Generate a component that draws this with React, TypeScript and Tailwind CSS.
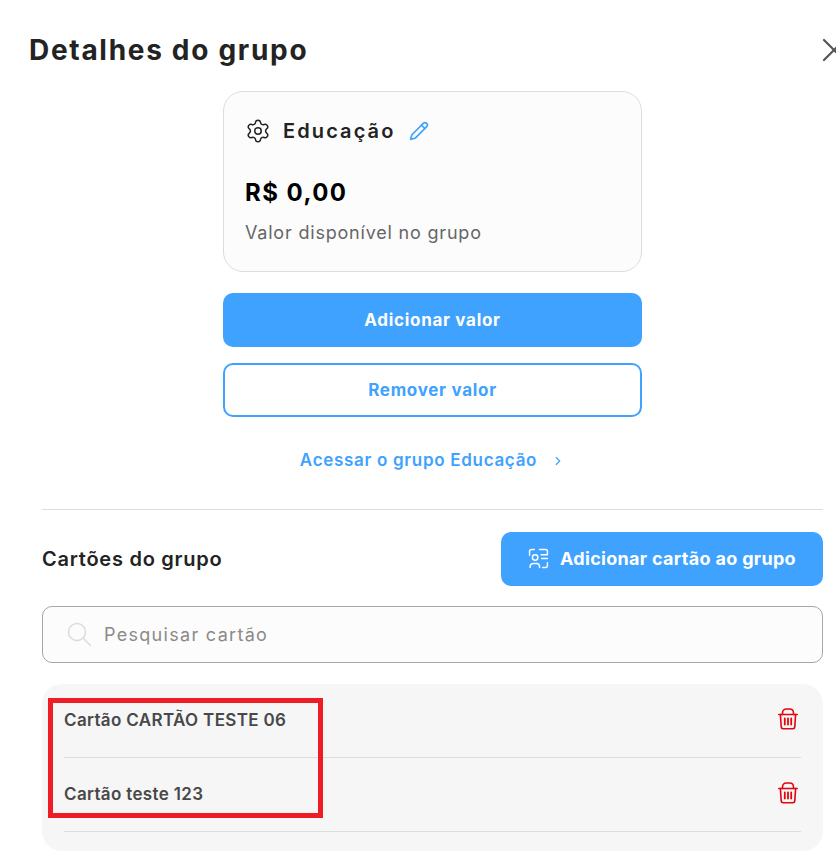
import { Pencil, Settings, ChevronRight, X } from 'lucide-react';

const FONT = "font-['Inter','Liberation_Sans',sans-serif]";

const CARDS = ['Cartão CARTÃO TESTE 06', 'Cartão teste 123'];

function TrashIcon() {
  return (
    <svg width="20" height="22" viewBox="0 0 20 22" fill="none" stroke="#e2060f" strokeWidth="1.6" strokeLinecap="round" strokeLinejoin="round">
      <path d="M0.800 6.500h18.400" />
      <path d="M4.500 6.500V5C4.500 2.600 6.200 1 8.400 1h3.200c2.200 0 3.900 1.600 3.900 4v1.500" />
      <path d="M2.400 6.500l.8 12.400c.1 1.100.8 1.800 1.900 1.800h9.800c1.100 0 1.800-.7 1.900-1.800l.8-12.400" />
      <path d="M6.800 10.500v6M10 10.500v6M13.200 10.500v6" strokeWidth="1.800" />
    </svg>
  );
}

function AddCardIcon() {
  return (
    <svg width="21" height="21" viewBox="0 0 20 20" fill="none" stroke="#ffffff" strokeWidth="1.400" strokeLinecap="round" strokeLinejoin="round">
      <path d="M1.500 7V3.200C1.500 2.200 2.200 1.500 3.200 1.500H6" />
      <path d="M11 1.500h5.800c1 0 1.700.7 1.700 1.700V6" />
      <path d="M18.500 14v3c0 .9-.6 1.500-1.500 1.500h-3" />
      <path d="M2 18.500v-.5c0-1.800 1.500-3.200 3.500-3.200h2.500c1.800 0 3 1.400 3 3.200v.5" />
      <circle cx="6.800" cy="9" r="2.600" />
      <path d="M12.500 6.500h6M13 10h5.500" />
    </svg>
  );
}

function SearchIcon() {
  return (
    <svg width="25" height="25" viewBox="0 0 25 25" fill="none" stroke="#dcdcdc" strokeWidth="1.500" strokeLinecap="round">
      <circle cx="10" cy="10" r="8.500" />
      <path d="M16.500 16.500l7 7" />
    </svg>
  );
}

export default function App() {
  return (
    <div className={`relative h-[851px] w-[836px] overflow-hidden bg-white ${FONT}`}>
      <div className="flex h-[100px] items-start justify-between pt-[32px] pl-[29px]">
        <h1 className="text-[28px] leading-[36px] font-bold tracking-[1.7px] text-[#232323]">Detalhes do grupo</h1>
        <X className="-mt-[2px] -mr-[18px] shrink-0 text-[#555555]" size={40} strokeWidth={1.3} />
      </div>

      <div className="-mt-[9px] ml-[223px] flex w-[419px] flex-col items-center">
        <div className="h-[181px] w-[419px] rounded-[20px] border border-[#dddddd] bg-[#fcfcfc] pt-[24px] pl-[21px]">
          <div className="flex h-[30px] items-center">
            <Settings size={26} strokeWidth={1.4} className="text-[#232323]" />
            <span className="ml-[12px] text-[20px] font-semibold tracking-[2.100px] text-[#232323]">Educação</span>
            <Pencil size={20} strokeWidth={2} className="ml-[14px] text-[#3fa2ff]" />
          </div>
          <p className="mt-[31px] text-[24px] leading-[32px] font-bold tracking-[1.450px] text-black">R$ 0,00</p>
          <p className="mt-[12px] text-[18px] leading-[24px] tracking-[0.800px] text-[#666666]">Valor disponível no grupo</p>
        </div>

        <button className="mt-[21px] h-[54px] w-[419px] rounded-[10px] bg-[#3fa2ff] pt-[2px] text-[17px] font-bold tracking-[0.700px] text-white">Adicionar valor</button>
        <button className="mt-[16px] h-[54px] w-[419px] rounded-[10px] border-2 border-[#3fa2ff] bg-white pt-[2px] text-[17px] font-bold tracking-[0.700px] text-[#3fa2ff]">Remover valor</button>

        <div className="mt-[31px] flex h-[26px] items-center text-[#3fa2ff]">
          <span className="text-[17px] font-semibold tracking-[0.700px]">Acessar o grupo Educação</span>
          <ChevronRight size={14} strokeWidth={2} className="ml-[14px]" />
        </div>
      </div>

      <div className="mt-[35px] ml-[42px] w-[781px]">
        <div className="border-t border-[#dddddd]" />

        <div className="mt-[22px] flex h-[54px] items-center justify-between">
          <h2 className="text-[20px] font-semibold tracking-[0.750px] text-[#232323]">Cartões do grupo</h2>
          <button className="flex h-[54px] w-[322px] items-center justify-center gap-[11px] rounded-[10px] bg-[#3fa2ff] pb-[2px] text-[18px] font-bold tracking-[0.300px] text-white">
            <AddCardIcon />
            Adicionar cartão ao grupo
          </button>
        </div>

        <div className="mt-[20px] flex h-[57px] items-center rounded-[10px] border border-[#a6a6a6] bg-[#fcfcfc] pl-[24px]">
          <SearchIcon />
          <span className="ml-[12px] text-[18px] tracking-[1.300px] text-[#8a8a8a]">Pesquisar cartão</span>
        </div>

        <div className="mt-[21px] h-[167px] rounded-[20px] bg-[#f6f6f6] px-[22px]">
          {CARDS.map((name) => (
            <div key={name} className="flex h-[74px] items-start justify-between border-b border-[#dddddd] pt-[24px]">
              <span className="text-[17px] leading-[24px] font-semibold tracking-[0.350px] text-[#484848]">{name}</span>
              <span className="mr-[3px]"><TrashIcon /></span>
            </div>
          ))}
        </div>
      </div>

      {/* red annotation drawn over the screenshot */}
      <div className="absolute top-[698px] left-[48px] h-[120px] w-[275px] border-[5px] border-[#ee1c25]" />
    </div>
  );
}
